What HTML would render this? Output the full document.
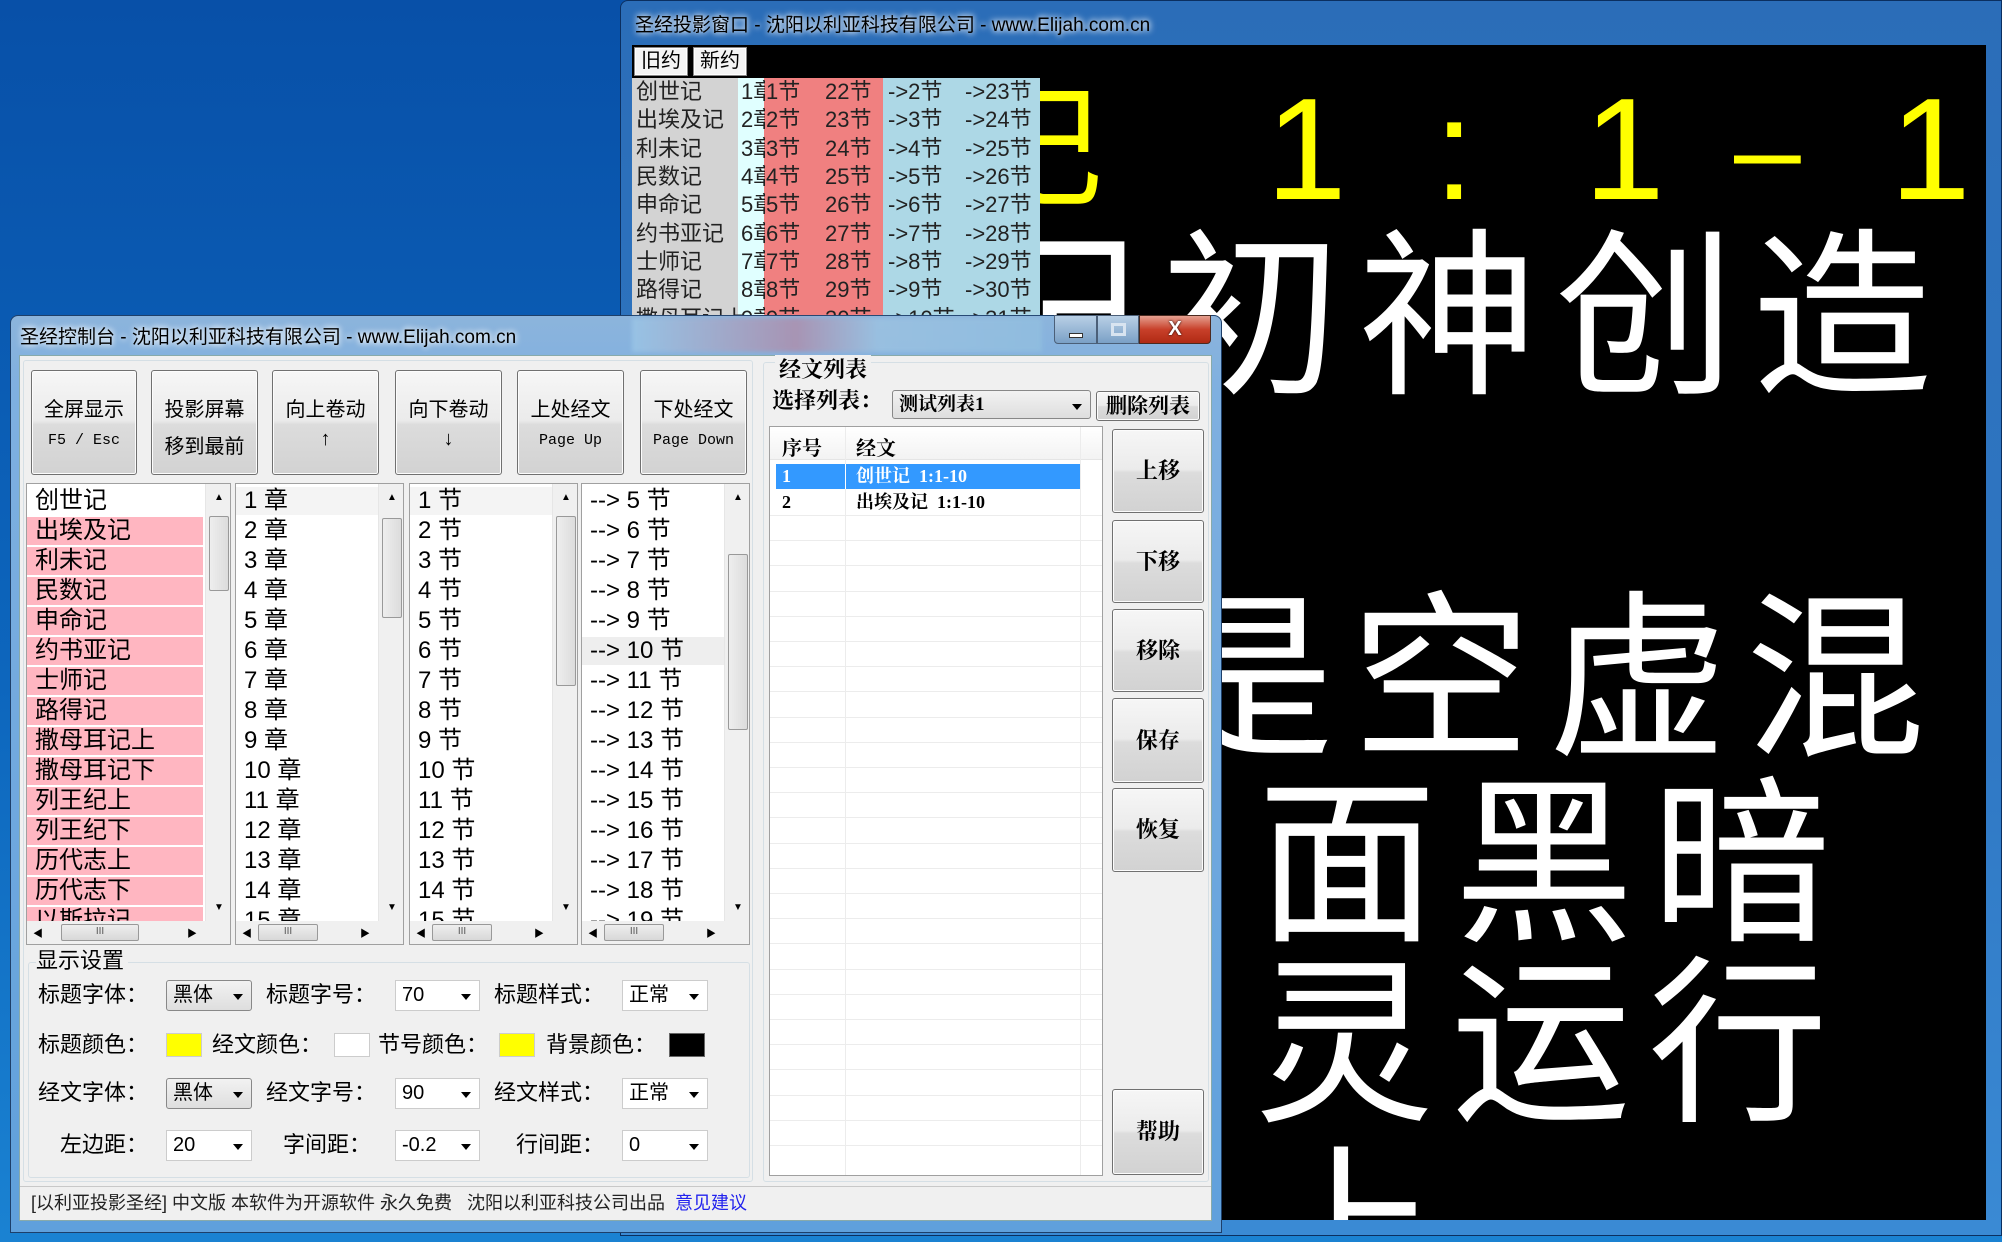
<!DOCTYPE html>
<html style="overflow:hidden"><head><meta charset="utf-8">
<style>
*{margin:0;padding:0;box-sizing:border-box}
html,body{width:2002px;height:1242px;overflow:hidden}
body{position:relative;font-family:"Liberation Sans","Noto Sans CJK SC",sans-serif;background:linear-gradient(180deg,#0850a8 0%,#0d66bd 55%,#1a82d2 100%)}
.a{position:absolute}
.ser{font-family:"Liberation Serif","Noto Serif CJK SC",serif;font-weight:bold}
#proj{left:620px;top:0;width:1382px;height:1236px;background:linear-gradient(180deg,#2b6db8,#2f78c4 60%,#3a8ad4);border-radius:8px 0 0 0;border:1px solid #0b2f60}
#black{left:632px;top:45px;width:1354px;height:1175px;background:#000;overflow:hidden}
.big{position:absolute;color:#fff;font-family:"Noto Sans CJK SC",sans-serif;font-size:180px;line-height:1;letter-spacing:17px;white-space:nowrap}
.yl{position:absolute;color:#ff0;font-family:"Liberation Sans",sans-serif;font-size:145px;line-height:1}
.tab{position:absolute;top:47px;height:29px;background:#f4f4f4;border:1px solid #888;box-shadow:inset 0 0 0 1px #fff;font-size:20px;line-height:27px;text-align:center;color:#000}
.trow{position:absolute;left:0;width:408px;height:28px;font-size:22px;line-height:28px;color:#222;white-space:nowrap}
.trow span{position:absolute}
.trow span.c{width:24px;overflow:hidden}
#ctl{left:10px;top:315px;width:1212px;height:918px;background:linear-gradient(180deg,#8cb4dc,#7fb0e0 8%,#5fa0dc 100%);border:1px solid #1d3f6a;border-radius:8px 8px 0 0}
#client{left:19px;top:355px;width:1193px;height:866px;background:#f0f0f0;border:1px solid #8aa}
.btn{position:absolute;background:linear-gradient(180deg,#f6f6f6 0%,#ebebeb 48%,#dcdcdc 52%,#d2d2d2 100%);border:1px solid #707070;border-radius:3px;box-shadow:inset 0 0 0 1px #fcfcfc;text-align:center;color:#000}
.list{position:absolute;background:#fff;border:1px solid #a0a0a0;overflow:hidden}
.row{position:absolute;left:0;height:28px;font-size:24px;line-height:28px;padding-left:8px;white-space:nowrap;color:#000}
.vs{position:absolute;top:0;width:26px;height:438px;background:#f0f0f0;border-left:1px solid #e6e6e6}
.thumb{position:absolute;left:3px;width:20px;background:linear-gradient(90deg,#eee,#dcdcdc);border:1px solid #999;border-radius:2px}
.hs{position:absolute;bottom:0;height:23px;background:#f0f0f0}
.hthumb{position:absolute;top:3px;height:17px;background:linear-gradient(180deg,#eee,#d8d8d8);border:1px solid #999;border-radius:2px;font-size:10px;text-align:center;line-height:14px;color:#555}
.lbl{position:absolute;font-size:22px;line-height:30px;color:#000;white-space:nowrap}
.cmb{position:absolute;height:31px;background:#fff;border:1px solid #ccc;font-size:20px;line-height:29px;padding-left:6px;color:#000}
.cmb:after{content:"";position:absolute;right:8px;top:13px;border:5px solid transparent;border-top:6px solid #000}
.cmb.g{background:linear-gradient(180deg,#f2f2f2,#dedede);border:1px solid #888;border-radius:3px}
.sw{position:absolute;top:1033px;width:36px;height:24px;border:1px solid #ccc}
.rb{position:absolute;left:1112px;width:92px;font-size:22px}
.lv{position:absolute;left:0;width:332px;height:1px;background:#ececec}
</style></head><body>

<div id="proj" class="a"></div>
<div class="a" style="left:635px;top:10px;font-size:19px;color:#000;text-shadow:0 0 8px #fff,0 0 6px #fff;white-space:nowrap">圣经投影窗口 - 沈阳以利亚科技有限公司 - www.Elijah.com.cn</div>
<div id="black" class="a">
  <div class="yl" style="left:336px;top:24px;font-family:'Noto Sans CJK SC',sans-serif;font-size:135px">记</div>
  <div class="yl" style="left:634px;top:32px">1</div>
  <div class="yl" style="left:802px;top:32px">:</div>
  <div class="yl" style="left:952px;top:32px">1</div>
  <div class="yl" style="left:1102px;top:32px;font-size:120px;top:44px">–</div>
  <div class="yl" style="left:1258px;top:32px">1</div>
  <div class="big" style="left:332px;top:167px">记初神创造</div>
  <div class="big" style="left:522px;top:529px">是空虚混</div>
  <div class="big" style="left:625px;top:714px">面黑暗</div>
  <div class="big" style="left:622px;top:894px">灵运行</div>
  <div class="big" style="left:625px;top:1082px">上</div>
</div>
<div class="tab" style="left:634px;width:54px">旧约</div>
<div class="tab" style="left:693px;width:54px">新约</div>
<div class="a" style="left:632px;top:78px;width:408px;height:240px;overflow:hidden">
  <div class="a" style="left:0;top:0;width:106px;height:240px;background:#d3d3d3"></div>
  <div class="a" style="left:106px;top:0;width:26px;height:240px;background:#e0ffff"></div>
  <div class="a" style="left:132px;top:0;width:119px;height:240px;background:#f08080"></div>
  <div class="a" style="left:251px;top:0;width:157px;height:240px;background:#add8e6"></div>
  <div class="trow" style="top:0"><span style="left:4px">创世记</span><span class="c" style="left:109px">1章</span><span style="left:134px">1节</span><span style="left:193px">22节</span><span style="left:256px">->2节</span><span style="left:333px">->23节</span></div>
  <div class="trow" style="top:28px"><span style="left:4px">出埃及记</span><span class="c" style="left:109px">2章</span><span style="left:134px">2节</span><span style="left:193px">23节</span><span style="left:256px">->3节</span><span style="left:333px">->24节</span></div>
  <div class="trow" style="top:57px"><span style="left:4px">利未记</span><span class="c" style="left:109px">3章</span><span style="left:134px">3节</span><span style="left:193px">24节</span><span style="left:256px">->4节</span><span style="left:333px">->25节</span></div>
  <div class="trow" style="top:85px"><span style="left:4px">民数记</span><span class="c" style="left:109px">4章</span><span style="left:134px">4节</span><span style="left:193px">25节</span><span style="left:256px">->5节</span><span style="left:333px">->26节</span></div>
  <div class="trow" style="top:113px"><span style="left:4px">申命记</span><span class="c" style="left:109px">5章</span><span style="left:134px">5节</span><span style="left:193px">26节</span><span style="left:256px">->6节</span><span style="left:333px">->27节</span></div>
  <div class="trow" style="top:142px"><span style="left:4px">约书亚记</span><span class="c" style="left:109px">6章</span><span style="left:134px">6节</span><span style="left:193px">27节</span><span style="left:256px">->7节</span><span style="left:333px">->28节</span></div>
  <div class="trow" style="top:170px"><span style="left:4px">士师记</span><span class="c" style="left:109px">7章</span><span style="left:134px">7节</span><span style="left:193px">28节</span><span style="left:256px">->8节</span><span style="left:333px">->29节</span></div>
  <div class="trow" style="top:198px"><span style="left:4px">路得记</span><span class="c" style="left:109px">8章</span><span style="left:134px">8节</span><span style="left:193px">29节</span><span style="left:256px">->9节</span><span style="left:333px">->30节</span></div>
  <div class="trow" style="top:227px"><span style="left:4px">撒母耳记上</span><span class="c" style="left:109px">9章</span><span style="left:134px">9节</span><span style="left:193px">30节</span><span style="left:256px">->10节</span><span style="left:333px">->31节</span></div>
</div>

<div id="ctl" class="a"></div>
<div class="a" style="left:632px;top:318px;width:410px;height:34px;background:linear-gradient(90deg,#9cc8e8,#b28aa6 40%,#9ec4e2 60%,#92c0e0);opacity:.75;filter:blur(2px)"></div>
<div class="a" style="left:20px;top:322px;font-size:19px;color:#000;text-shadow:0 0 8px #fff,0 0 6px #fff;white-space:nowrap">圣经控制台 - 沈阳以利亚科技有限公司 - www.Elijah.com.cn</div>
<div class="a" style="left:1054px;top:315px;width:43px;height:29px;background:linear-gradient(180deg,#b9d0e6,#7aa0c6);border:1px solid #4b5f78;border-radius:0 0 0 4px"><div class="a" style="left:14px;top:17px;width:14px;height:5px;background:#fff;border:1px solid #333"></div></div>
<div class="a" style="left:1097px;top:315px;width:42px;height:29px;background:linear-gradient(180deg,#b9d0e6,#7aa0c6);border:1px solid #4b5f78"><div class="a" style="left:13px;top:7px;width:15px;height:13px;border:3px solid #d8e4f0"></div></div>
<div class="a" style="left:1139px;top:315px;width:72px;height:29px;background:linear-gradient(180deg,#e5a090,#c8402a 50%,#b02a14);border:1px solid #4b2a20;border-radius:0 0 4px 0;color:#fff;font-weight:bold;font-size:20px;text-align:center;line-height:27px;text-shadow:0 0 2px #000">X</div>

<div id="client" class="a"></div>
<div class="a" style="left:23px;top:360px;width:730px;height:822px;border:1px solid #d5dfe5;border-radius:3px"></div>
<div class="btn" style="left:31px;top:370px;width:106px;height:105px"><div style="margin-top:22px;font-size:20px">全屏显示</div><div style="margin-top:10px;font-size:15px;font-family:'Liberation Mono',monospace">F5 / Esc</div></div>
<div class="btn" style="left:151px;top:370px;width:107px;height:105px"><div style="margin-top:22px;font-size:20px">投影屏幕</div><div style="margin-top:8px;font-size:20px">移到最前</div></div>
<div class="btn" style="left:272px;top:370px;width:107px;height:105px"><div style="margin-top:22px;font-size:20px">向上卷动</div><div style="margin-top:6px;font-size:20px">↑</div></div>
<div class="btn" style="left:395px;top:370px;width:107px;height:105px"><div style="margin-top:22px;font-size:20px">向下卷动</div><div style="margin-top:6px;font-size:20px">↓</div></div>
<div class="btn" style="left:517px;top:370px;width:107px;height:105px"><div style="margin-top:22px;font-size:20px">上处经文</div><div style="margin-top:10px;font-size:15px;font-family:'Liberation Mono',monospace">Page Up</div></div>
<div class="btn" style="left:640px;top:370px;width:107px;height:105px"><div style="margin-top:22px;font-size:20px">下处经文</div><div style="margin-top:10px;font-size:15px;font-family:'Liberation Mono',monospace">Page Down</div></div>

<div class="list" style="left:26px;top:483px;width:205px;height:462px">
  <div class="row" style="top:3px;width:178px;background:#fff">创世记</div>
  <div class="row" style="top:33px;width:176px;background:#ffb6c1">出埃及记</div>
  <div class="row" style="top:63px;width:176px;background:#ffb6c1">利未记</div>
  <div class="row" style="top:93px;width:176px;background:#ffb6c1">民数记</div>
  <div class="row" style="top:123px;width:176px;background:#ffb6c1">申命记</div>
  <div class="row" style="top:153px;width:176px;background:#ffb6c1">约书亚记</div>
  <div class="row" style="top:183px;width:176px;background:#ffb6c1">士师记</div>
  <div class="row" style="top:213px;width:176px;background:#ffb6c1">路得记</div>
  <div class="row" style="top:243px;width:176px;background:#ffb6c1">撒母耳记上</div>
  <div class="row" style="top:273px;width:176px;background:#ffb6c1">撒母耳记下</div>
  <div class="row" style="top:303px;width:176px;background:#ffb6c1">列王纪上</div>
  <div class="row" style="top:333px;width:176px;background:#ffb6c1">列王纪下</div>
  <div class="row" style="top:363px;width:176px;background:#ffb6c1">历代志上</div>
  <div class="row" style="top:393px;width:176px;background:#ffb6c1">历代志下</div>
  <div class="row" style="top:423px;width:176px;background:#ffb6c1">以斯拉记</div>
  <div class="vs" style="left:178px"><div class="a" style="left:8px;top:8px;font-size:10px">▲</div><div class="thumb" style="top:32px;height:75px"></div><div class="a" style="left:8px;top:418px;font-size:10px">▼</div></div>
  <div class="hs" style="left:0;width:204px"><div class="a" style="left:6px;top:4px;font-size:10px">◀</div><div class="hthumb" style="left:34px;width:78px">III</div><div class="a" style="left:160px;top:4px;font-size:10px">▶</div></div>
</div>
<div class="list" style="left:235px;top:483px;width:169px;height:462px">
  <div class="row" style="top:3px;width:142px;background:#f4f4f4">1 章</div>
  <div class="row" style="top:33px;width:142px">2 章</div>
  <div class="row" style="top:63px;width:142px">3 章</div>
  <div class="row" style="top:93px;width:142px">4 章</div>
  <div class="row" style="top:123px;width:142px">5 章</div>
  <div class="row" style="top:153px;width:142px">6 章</div>
  <div class="row" style="top:183px;width:142px">7 章</div>
  <div class="row" style="top:213px;width:142px">8 章</div>
  <div class="row" style="top:243px;width:142px">9 章</div>
  <div class="row" style="top:273px;width:142px">10 章</div>
  <div class="row" style="top:303px;width:142px">11 章</div>
  <div class="row" style="top:333px;width:142px">12 章</div>
  <div class="row" style="top:363px;width:142px">13 章</div>
  <div class="row" style="top:393px;width:142px">14 章</div>
  <div class="row" style="top:423px;width:142px">15 章</div>
  <div class="vs" style="left:142px"><div class="a" style="left:8px;top:8px;font-size:10px">▲</div><div class="thumb" style="top:34px;height:100px"></div><div class="a" style="left:8px;top:418px;font-size:10px">▼</div></div>
  <div class="hs" style="left:0;width:168px"><div class="a" style="left:6px;top:4px;font-size:10px">◀</div><div class="hthumb" style="left:22px;width:60px">III</div><div class="a" style="left:124px;top:4px;font-size:10px">▶</div></div>
</div>
<div class="list" style="left:409px;top:483px;width:169px;height:462px">
  <div class="row" style="top:3px;width:142px;background:#f4f4f4">1 节</div>
  <div class="row" style="top:33px;width:142px">2 节</div>
  <div class="row" style="top:63px;width:142px">3 节</div>
  <div class="row" style="top:93px;width:142px">4 节</div>
  <div class="row" style="top:123px;width:142px">5 节</div>
  <div class="row" style="top:153px;width:142px">6 节</div>
  <div class="row" style="top:183px;width:142px">7 节</div>
  <div class="row" style="top:213px;width:142px">8 节</div>
  <div class="row" style="top:243px;width:142px">9 节</div>
  <div class="row" style="top:273px;width:142px">10 节</div>
  <div class="row" style="top:303px;width:142px">11 节</div>
  <div class="row" style="top:333px;width:142px">12 节</div>
  <div class="row" style="top:363px;width:142px">13 节</div>
  <div class="row" style="top:393px;width:142px">14 节</div>
  <div class="row" style="top:423px;width:142px">15 节</div>
  <div class="vs" style="left:142px"><div class="a" style="left:8px;top:8px;font-size:10px">▲</div><div class="thumb" style="top:32px;height:170px"></div><div class="a" style="left:8px;top:418px;font-size:10px">▼</div></div>
  <div class="hs" style="left:0;width:168px"><div class="a" style="left:6px;top:4px;font-size:10px">◀</div><div class="hthumb" style="left:22px;width:60px">III</div><div class="a" style="left:124px;top:4px;font-size:10px">▶</div></div>
</div>
<div class="list" style="left:581px;top:483px;width:169px;height:462px">
  <div class="row" style="top:3px;width:142px">--&gt; 5 节</div>
  <div class="row" style="top:33px;width:142px">--&gt; 6 节</div>
  <div class="row" style="top:63px;width:142px">--&gt; 7 节</div>
  <div class="row" style="top:93px;width:142px">--&gt; 8 节</div>
  <div class="row" style="top:123px;width:142px">--&gt; 9 节</div>
  <div class="row" style="top:153px;width:142px;background:#eeeeee">--&gt; 10 节</div>
  <div class="row" style="top:183px;width:142px">--&gt; 11 节</div>
  <div class="row" style="top:213px;width:142px">--&gt; 12 节</div>
  <div class="row" style="top:243px;width:142px">--&gt; 13 节</div>
  <div class="row" style="top:273px;width:142px">--&gt; 14 节</div>
  <div class="row" style="top:303px;width:142px">--&gt; 15 节</div>
  <div class="row" style="top:333px;width:142px">--&gt; 16 节</div>
  <div class="row" style="top:363px;width:142px">--&gt; 17 节</div>
  <div class="row" style="top:393px;width:142px">--&gt; 18 节</div>
  <div class="row" style="top:423px;width:142px">--&gt; 19 节</div>
  <div class="vs" style="left:142px"><div class="a" style="left:8px;top:8px;font-size:10px">▲</div><div class="thumb" style="top:70px;height:176px"></div><div class="a" style="left:8px;top:418px;font-size:10px">▼</div></div>
  <div class="hs" style="left:0;width:168px"><div class="a" style="left:6px;top:4px;font-size:10px">◀</div><div class="hthumb" style="left:22px;width:60px">III</div><div class="a" style="left:124px;top:4px;font-size:10px">▶</div></div>
</div>

<div class="a" style="left:28px;top:962px;width:722px;height:216px;border:1px solid #d5dfe5;border-radius:3px"></div>
<div class="lbl" style="left:36px;top:946px;background:#f0f0f0;padding-right:4px">显示设置</div>
<div class="lbl" style="left:38px;top:980px">标题字体：</div>
<div class="cmb g" style="left:166px;top:980px;width:86px">黑体</div>
<div class="lbl" style="left:266px;top:980px">标题字号：</div>
<div class="cmb" style="left:395px;top:980px;width:85px">70</div>
<div class="lbl" style="left:494px;top:980px">标题样式：</div>
<div class="cmb" style="left:622px;top:980px;width:86px">正常</div>

<div class="lbl" style="left:38px;top:1030px">标题颜色：</div>
<div class="sw" style="left:166px;background:#ff0"></div>
<div class="lbl" style="left:212px;top:1030px">经文颜色：</div>
<div class="sw" style="left:334px;background:#fff"></div>
<div class="lbl" style="left:378px;top:1030px">节号颜色：</div>
<div class="sw" style="left:499px;background:#ff0"></div>
<div class="lbl" style="left:546px;top:1030px">背景颜色：</div>
<div class="sw" style="left:669px;background:#000;border-color:#666"></div>

<div class="lbl" style="left:38px;top:1078px">经文字体：</div>
<div class="cmb g" style="left:166px;top:1078px;width:86px">黑体</div>
<div class="lbl" style="left:266px;top:1078px">经文字号：</div>
<div class="cmb" style="left:395px;top:1078px;width:85px">90</div>
<div class="lbl" style="left:494px;top:1078px">经文样式：</div>
<div class="cmb" style="left:622px;top:1078px;width:86px">正常</div>

<div class="lbl" style="left:60px;top:1130px">左边距：</div>
<div class="cmb" style="left:166px;top:1130px;width:86px">20</div>
<div class="lbl" style="left:283px;top:1130px">字间距：</div>
<div class="cmb" style="left:395px;top:1130px;width:85px">-0.2</div>
<div class="lbl" style="left:516px;top:1130px">行间距：</div>
<div class="cmb" style="left:622px;top:1130px;width:86px">0</div>

<div class="a" style="left:763px;top:362px;width:446px;height:820px;border:1px solid #d5dfe5;border-radius:3px"></div>
<div class="lbl ser" style="left:775px;top:355px;background:#f0f0f0;padding:0 4px;font-size:22px">经文列表</div>
<div class="lbl ser" style="left:772px;top:386px;font-size:22px">选择列表：</div>
<div class="cmb g ser" style="left:892px;top:390px;width:199px;height:29px;font-size:19px;line-height:27px">测试列表1</div>
<div class="btn ser" style="left:1096px;top:391px;width:104px;height:30px;font-size:21px;line-height:28px">删除列表</div>
<div class="a" style="left:769px;top:426px;width:334px;height:750px;background:#fff;border:1px solid #a0a0a0;overflow:hidden">
  <div class="a" style="left:0;top:0;width:332px;height:33px;background:linear-gradient(180deg,#fff,#f3f3f3);border-bottom:1px solid #e5e5e5"></div>
  <div class="a ser" style="left:12px;top:5px;font-size:20px">序号</div>
  <div class="a ser" style="left:86px;top:5px;font-size:20px">经文</div>
  <div class="a" style="left:75px;top:0;width:1px;height:750px;background:#ececec"></div>
  <div class="a" style="left:310px;top:0;width:1px;height:750px;background:#ececec"></div>
  <div class="a" style="left:6px;top:37px;width:304px;height:25px;background:#3399ff"></div>
  <div class="a" style="left:75px;top:37px;width:1px;height:25px;background:#fff"></div>
  <div class="a ser" style="left:12px;top:37px;font-size:18px;line-height:25px;color:#fff">1</div>
  <div class="a ser" style="left:86px;top:37px;font-size:18px;line-height:25px;color:#fff;white-space:pre">创世记  1:1-10</div>
  <div class="a ser" style="left:12px;top:63px;font-size:18px;line-height:25px">2</div>
  <div class="a ser" style="left:86px;top:63px;font-size:18px;line-height:25px;white-space:pre">出埃及记  1:1-10</div>
  <div class="lv" style="top:88px"></div><div class="lv" style="top:113px"></div><div class="lv" style="top:138px"></div><div class="lv" style="top:164px"></div><div class="lv" style="top:189px"></div><div class="lv" style="top:214px"></div><div class="lv" style="top:239px"></div><div class="lv" style="top:264px"></div><div class="lv" style="top:290px"></div><div class="lv" style="top:315px"></div><div class="lv" style="top:340px"></div><div class="lv" style="top:365px"></div><div class="lv" style="top:390px"></div><div class="lv" style="top:416px"></div><div class="lv" style="top:441px"></div><div class="lv" style="top:466px"></div><div class="lv" style="top:491px"></div><div class="lv" style="top:516px"></div><div class="lv" style="top:542px"></div><div class="lv" style="top:567px"></div><div class="lv" style="top:592px"></div><div class="lv" style="top:617px"></div><div class="lv" style="top:642px"></div><div class="lv" style="top:668px"></div><div class="lv" style="top:693px"></div><div class="lv" style="top:718px"></div>
</div>
<div class="btn rb ser" style="top:429px;height:84px;line-height:82px">上移</div>
<div class="btn rb ser" style="top:520px;height:83px;line-height:81px">下移</div>
<div class="btn rb ser" style="top:609px;height:83px;line-height:81px">移除</div>
<div class="btn rb ser" style="top:698px;height:85px;line-height:83px">保存</div>
<div class="btn rb ser" style="top:788px;height:84px;line-height:82px">恢复</div>
<div class="btn rb ser" style="top:1089px;height:86px;line-height:84px">帮助</div>

<div class="a" style="left:20px;top:1186px;width:1191px;height:1px;background:#c8c8c8"></div>
<div class="a" style="left:31px;top:1190px;font-size:18px;line-height:26px;color:#222;white-space:pre">[以利亚投影圣经] 中文版 本软件为开源软件 永久免费   沈阳以利亚科技公司出品  <span style="color:#2222ee">意见建议</span></div>
</body></html>
